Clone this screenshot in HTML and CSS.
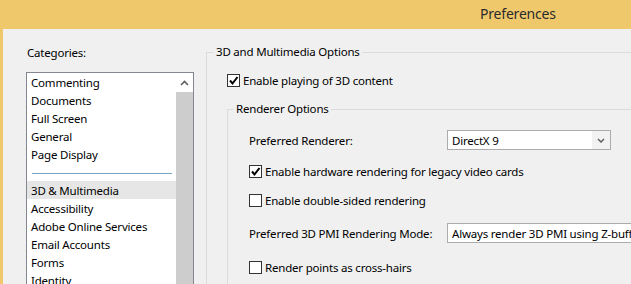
FILE: index.html
```html
<!DOCTYPE html>
<html lang="en">
<head>
    <meta charset="UTF-8">
    <title>Preferences</title>
    <link rel="stylesheet" href="styles.css">
</head>
<body>
    <div class="window">
        <div class="titlebar">
            <span class="title">Preferences</span>
        </div>

        <div class="content">
            <aside class="sidebar">
                <div class="cat-label">Categories:</div>
                <div class="listbox">
                    <ul class="cat-list">
                        <li>Commenting</li>
                        <li>Documents</li>
                        <li>Full Screen</li>
                        <li>General</li>
                        <li>Page Display</li>
                        <li class="sep"></li>
                        <li class="selected">3D &amp; Multimedia</li>
                        <li>Accessibility</li>
                        <li>Adobe Online Services</li>
                        <li>Email Accounts</li>
                        <li>Forms</li>
                        <li>Identity</li>
                    </ul>
                    <div class="scrollbar">
                        <div class="scroll-up">
                            <svg width="9" height="6" viewBox="0 0 9 6"><path d="M1 5 L4.5 1.5 L8 5" fill="none" stroke="#606060" stroke-width="1.6"/></svg>
                        </div>
                        <div class="thumb"></div>
                    </div>
                </div>
            </aside>

            <main class="panel">
                <fieldset class="group outer">
                    <legend>3D and Multimedia Options</legend>
                    <div class="group-body">
                        <label class="check-row">
                            <span class="checkbox"><svg width="11" height="11" viewBox="0 0 11 11"><path d="M2 5.5 L4.5 8.5 L9.5 2" fill="none" stroke="#000" stroke-width="2"/></svg></span>
                            Enable playing of 3D content
                        </label>

                        <fieldset class="group inner">
                            <legend>Renderer Options</legend>
                            <div class="inner-body">
                                <div class="field-row">
                                    <span class="field-label">Preferred Renderer:</span>
                                    <div class="combo short">
                                        <span class="combo-text">DirectX 9</span>
                                        <span class="combo-btn"><svg width="8" height="5" viewBox="0 0 8 5"><path d="M1 1 L4 4 L7 1" fill="none" stroke="#606060" stroke-width="1.5"/></svg></span>
                                    </div>
                                </div>

                                <label class="check-row">
                                    <span class="checkbox"><svg width="11" height="11" viewBox="0 0 11 11"><path d="M2 5.5 L4.5 8.5 L9.5 2" fill="none" stroke="#000" stroke-width="2"/></svg></span>
                                    Enable hardware rendering for legacy video cards
                                </label>

                                <label class="check-row">
                                    <span class="checkbox"></span>
                                    Enable double-sided rendering
                                </label>

                                <div class="field-row pmi">
                                    <span class="field-label">Preferred 3D PMI Rendering Mode:</span>
                                    <div class="combo long">
                                        <span class="combo-text">Always render 3D PMI using Z-buffer</span>
                                    </div>
                                </div>

                                <label class="check-row last">
                                    <span class="checkbox"></span>
                                    Render points as cross-hairs
                                </label>
                            </div>
                        </fieldset>
                    </div>
                </fieldset>
            </main>
        </div>
    </div>
</body>
</html>
```

FILE: styles.css
```css
:root {
    --frame: #f0c86c;
    --face: #f0f0f0;
    --group-line: #dcdcdc;
}

html, body {
    margin: 0;
    padding: 0;
}

body {
    font-family: 'Noto Sans', 'Open Sans', sans-serif;
    font-size: 11.5px;
    letter-spacing: -0.2px;
    color: #000;
    background: var(--face);
    overflow: hidden;
}

.window {
    width: 631px;
    height: 284px;
    overflow: hidden;
}

.titlebar {
    height: 29px;
    background: var(--frame);
    display: flex;
    align-items: center;
    padding: 0 0 3px 480px;
    box-sizing: border-box;
}

.title {
    font-size: 14px;
    letter-spacing: -0.2px;
    color: #2b2b2b;
}

.content {
    display: flex;
    height: 255px;
    border-left: 3px solid var(--frame);
    background: var(--face);
}

/* left column */
.sidebar {
    flex: none;
    width: 168px;
    padding-left: 23px;
}

.cat-label {
    padding: 16px 0 0 1px;
    line-height: 16px;
    margin-bottom: 11px;
}

.listbox {
    display: flex;
    width: 168px;
    height: 230px;
    box-sizing: border-box;
    border: 1px solid #828790;
    border-bottom: none;
    background: #fff;
}

.cat-list {
    list-style: none;
    margin: 0;
    padding: 0;
    width: 149px;
}

.cat-list li {
    height: 18px;
    line-height: 19px;
    padding-left: 4px;
    white-space: nowrap;
}

.cat-list li.selected {
    background: #e6e6e6;
}

.cat-list li.sep {
    position: relative;
}

.cat-list li.sep::after {
    content: "";
    position: absolute;
    left: 5px;
    right: 4px;
    top: 10px;
    border-top: 1px solid #7aa3c2;
}

.scrollbar {
    width: 17px;
    display: flex;
    flex-direction: column;
}

.scroll-up {
    height: 19px;
    display: flex;
    align-items: center;
    justify-content: center;
    background: #fff;
}

.thumb {
    flex: 1;
    background: #cdcdcd;
}

/* right panel */
.panel {
    padding: 15px 0 0 12px;
}

.group {
    margin: 0;
    padding: 0;
    min-width: 0;
    border: 1px solid var(--group-line);
}

.group legend {
    padding: 0 2px;
    line-height: 16px;
}

.outer {
    width: 520px;
    height: 300px;
}

.outer > legend {
    margin-left: 7px;
}

.group-body {
    padding: 12px 0 0 20px;
}

.inner {
    margin-top: 13px;
    height: 300px;
}

.inner > legend {
    margin-left: 6px;
}

.inner-body {
    display: flex;
    flex-direction: column;
    gap: 13px;
    padding: 13px 0 0 21px;
}

.check-row {
    display: flex;
    align-items: center;
    height: 16px;
    white-space: nowrap;
}

.checkbox {
    width: 13px;
    height: 13px;
    box-sizing: border-box;
    border: 1px solid #333;
    background: #fff;
    margin-right: 3px;
    display: flex;
    align-items: center;
    justify-content: center;
}

.field-row {
    display: flex;
    align-items: center;
    height: 20px;
}

.field-row.pmi {
    margin-top: 2px;
}

.check-row.last {
    margin-top: 3px;
}

.field-label {
    width: 198px;
    flex: none;
    white-space: nowrap;
}

.combo {
    display: flex;
    align-items: center;
    height: 20px;
    box-sizing: border-box;
    border: 1px solid #acacac;
    background: #fff;
    padding-left: 4px;
    white-space: nowrap;
    overflow: hidden;
}

.combo.short {
    width: 164px;
}

.combo.long {
    width: 260px;
    flex: none;
}

.combo-btn {
    margin-left: auto;
    width: 18px;
    height: 100%;
    background: #f2f2f2;
    display: flex;
    align-items: center;
    justify-content: center;
}
```
